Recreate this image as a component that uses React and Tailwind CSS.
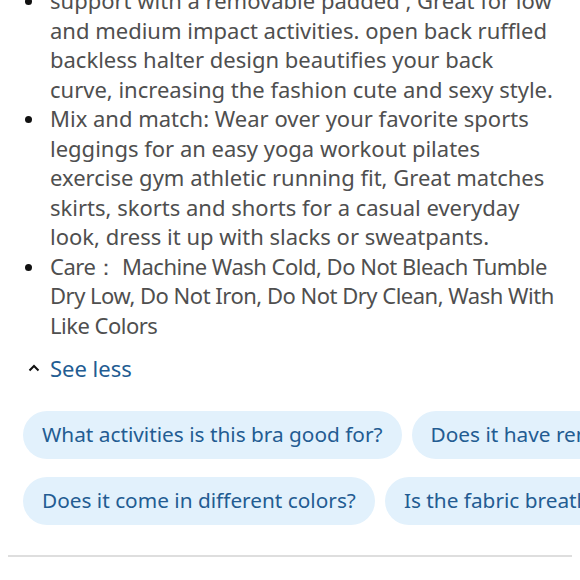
import React from "react";

const bullets = [
  [
    "support with a removable padded , Great for low",
    "and medium impact activities. open back ruffled",
    "backless halter design beautifies your back",
    "curve, increasing the fashion cute and sexy style.",
  ],
  [
    "Mix and match: Wear over your favorite sports",
    "leggings for an easy yoga workout pilates",
    "exercise gym athletic running fit, Great matches",
    "skirts, skorts and shorts for a casual everyday",
    "look, dress it up with slacks or sweatpants.",
  ],
  [
    "Care\uFF1A Machine Wash Cold, Do Not Bleach Tumble",
    "Dry Low, Do Not Iron, Do Not Dry Clean, Wash With",
    "Like Colors",
  ],
];

function Chip({ children }) {
  return (
    <div className="shrink-0 h-[48px] rounded-full bg-[#e2f1fc] px-[19px] flex items-center text-[20.8px] text-[#235c92] whitespace-nowrap">
      {children}
    </div>
  );
}

export default function App() {
  return (
    <div
      className="w-[580px] h-[580px] overflow-hidden bg-white"
      style={{ fontFamily: "'Noto Sans', Roboto, sans-serif" }}
    >
      <div className="mt-[-14px]">
        <ul className="pl-[50px] pr-[10px] text-[22px] leading-[29.5px] text-[#4f4f4f]">
          {bullets.map((lines, i) => (
            <li key={i} className={i === 2 ? "relative tracking-[-0.5px]" : "relative"}>
              <span className="absolute left-[-25px] top-[12px] w-[7px] h-[7px] rounded-full bg-[#111]" />
              {lines.map((l, j) => (
                <div key={j} className="whitespace-nowrap">
                  {l}
                </div>
              ))}
            </li>
          ))}
        </ul>
        <div className="flex items-center pl-[28px] mt-[13px] h-[30px]">
          <svg width="12" height="8" viewBox="0 0 12 8" className="mr-[10px]">
            <path d="M1.5 6.5 L6 2 L10.5 6.5" fill="none" stroke="#111" strokeWidth="2" />
          </svg>
          <span className="text-[22px] text-[#235c92]">See less</span>
        </div>
        <div className="mt-[28px] pl-[23px] flex flex-col gap-[18px]">
          <div className="flex gap-[10px]">
            <Chip>What activities is this bra good for?</Chip>
            <Chip>Does it have removable pads?</Chip>
          </div>
          <div className="flex gap-[10px]">
            <Chip>Does it come in different colors?</Chip>
            <Chip>Is the fabric breathable?</Chip>
          </div>
        </div>
        <div className="mt-[30px] mx-[8px] h-[2px] bg-[#dedede]" />
      </div>
    </div>
  );
}
